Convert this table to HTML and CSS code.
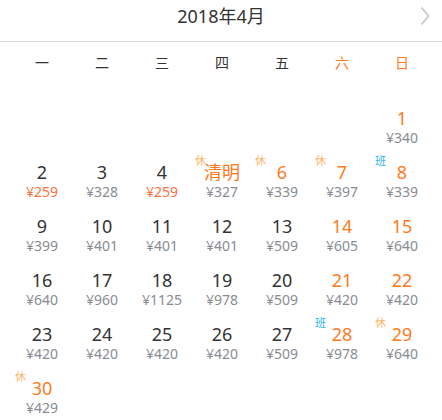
FILE: index.html
```html
<!DOCTYPE html>
<html lang="zh-CN">
<head>
<meta charset="utf-8">
<link rel="stylesheet" href="styles.css">
</head>
<body>
<div class="cal">
  <div class="head">
    <span class="title">2018年4月</span>
    <svg class="next" width="10" height="20" viewBox="0 0 10 20"><path d="M1.5 1.5 L8.5 10 L1.5 18.5" fill="none" stroke="#c8c8c8" stroke-width="1.8"/></svg>
  </div>
  <div class="week">
    <span>一</span><span>二</span><span>三</span><span>四</span><span>五</span><span class="we">六</span><span class="we">日</span>
  </div>
  <div class="grid">
    <div class="cell"></div><div class="cell"></div><div class="cell"></div><div class="cell"></div><div class="cell"></div><div class="cell"></div>
    <div class="cell hol"><div class="d">1</div><div class="p">¥340</div></div>

    <div class="cell"><div class="d">2</div><div class="p low">¥259</div></div>
    <div class="cell"><div class="d">3</div><div class="p">¥328</div></div>
    <div class="cell"><div class="d">4</div><div class="p low">¥259</div></div>
    <div class="cell hol"><span class="tag rest">休</span><div class="d">清明</div><div class="p">¥327</div></div>
    <div class="cell hol"><span class="tag rest">休</span><div class="d">6</div><div class="p">¥339</div></div>
    <div class="cell hol"><span class="tag rest">休</span><div class="d">7</div><div class="p">¥397</div></div>
    <div class="cell hol"><span class="tag work">班</span><div class="d">8</div><div class="p">¥339</div></div>

    <div class="cell"><div class="d">9</div><div class="p">¥399</div></div>
    <div class="cell"><div class="d">10</div><div class="p">¥401</div></div>
    <div class="cell"><div class="d">11</div><div class="p">¥401</div></div>
    <div class="cell"><div class="d">12</div><div class="p">¥401</div></div>
    <div class="cell"><div class="d">13</div><div class="p">¥509</div></div>
    <div class="cell hol"><div class="d">14</div><div class="p">¥605</div></div>
    <div class="cell hol"><div class="d">15</div><div class="p">¥640</div></div>

    <div class="cell"><div class="d">16</div><div class="p">¥640</div></div>
    <div class="cell"><div class="d">17</div><div class="p">¥960</div></div>
    <div class="cell"><div class="d">18</div><div class="p">¥1125</div></div>
    <div class="cell"><div class="d">19</div><div class="p">¥978</div></div>
    <div class="cell"><div class="d">20</div><div class="p">¥509</div></div>
    <div class="cell hol"><div class="d">21</div><div class="p">¥420</div></div>
    <div class="cell hol"><div class="d">22</div><div class="p">¥420</div></div>

    <div class="cell"><div class="d">23</div><div class="p">¥420</div></div>
    <div class="cell"><div class="d">24</div><div class="p">¥420</div></div>
    <div class="cell"><div class="d">25</div><div class="p">¥420</div></div>
    <div class="cell"><div class="d">26</div><div class="p">¥420</div></div>
    <div class="cell"><div class="d">27</div><div class="p">¥509</div></div>
    <div class="cell hol"><span class="tag work">班</span><div class="d">28</div><div class="p">¥978</div></div>
    <div class="cell hol"><span class="tag rest">休</span><div class="d">29</div><div class="p">¥640</div></div>

    <div class="cell hol"><span class="tag rest">休</span><div class="d">30</div><div class="p">¥429</div></div>
  </div>
</div>
</body>
</html>
```
FILE: styles.css
```css
html, body {
  margin: 0;
  padding: 0;
  background: #fff;
}
body {
  font-family: "Noto Sans", "Noto Sans CJK SC", sans-serif;
  color: #333;
}
.cal {
  width: 442px;
}
.head {
  position: relative;
  height: 41px;
  border-bottom: 1px solid #dcdcdc;
  text-align: center;
}
.title {
  display: inline-block;
  font-size: 18px;
  line-height: 32px;
  color: #333;
}
.next {
  position: absolute;
  right: 12px;
  top: 6px;
}
.week {
  display: grid;
  grid-template-columns: repeat(7, 60px);
  padding: 0 10px 0 12px;
  height: 40px;
  align-items: center;
  font-family: "Noto Sans CJK SC", sans-serif;
  font-size: 14px;
  color: #333;
  text-align: center;
}
.week .we {
  color: #ff7a1c;
}
.grid {
  display: grid;
  grid-template-columns: repeat(7, 60px);
  grid-auto-rows: 54px;
  padding: 19px 10px 0 12px;
}
.cell {
  position: relative;
  text-align: center;
}
.d {
  margin-top: 6px;
  height: 22px;
  line-height: 22px;
  font-size: 18px;
  color: #333;
}
.hol .d {
  color: #ff7a1c;
}
.p {
  margin-top: 1px;
  line-height: 16px;
  font-size: 14px;
  color: #888c92;
}
.p.low {
  color: #ff6f40;
}
.tag {
  position: absolute;
  left: 3px;
  top: -2px;
  font-family: "Noto Sans CJK SC", sans-serif;
  font-size: 11px;
  line-height: 14px;
}
.tag.rest {
  color: #ffb56b;
}
.tag.work {
  color: #2ab2e6;
}
```
